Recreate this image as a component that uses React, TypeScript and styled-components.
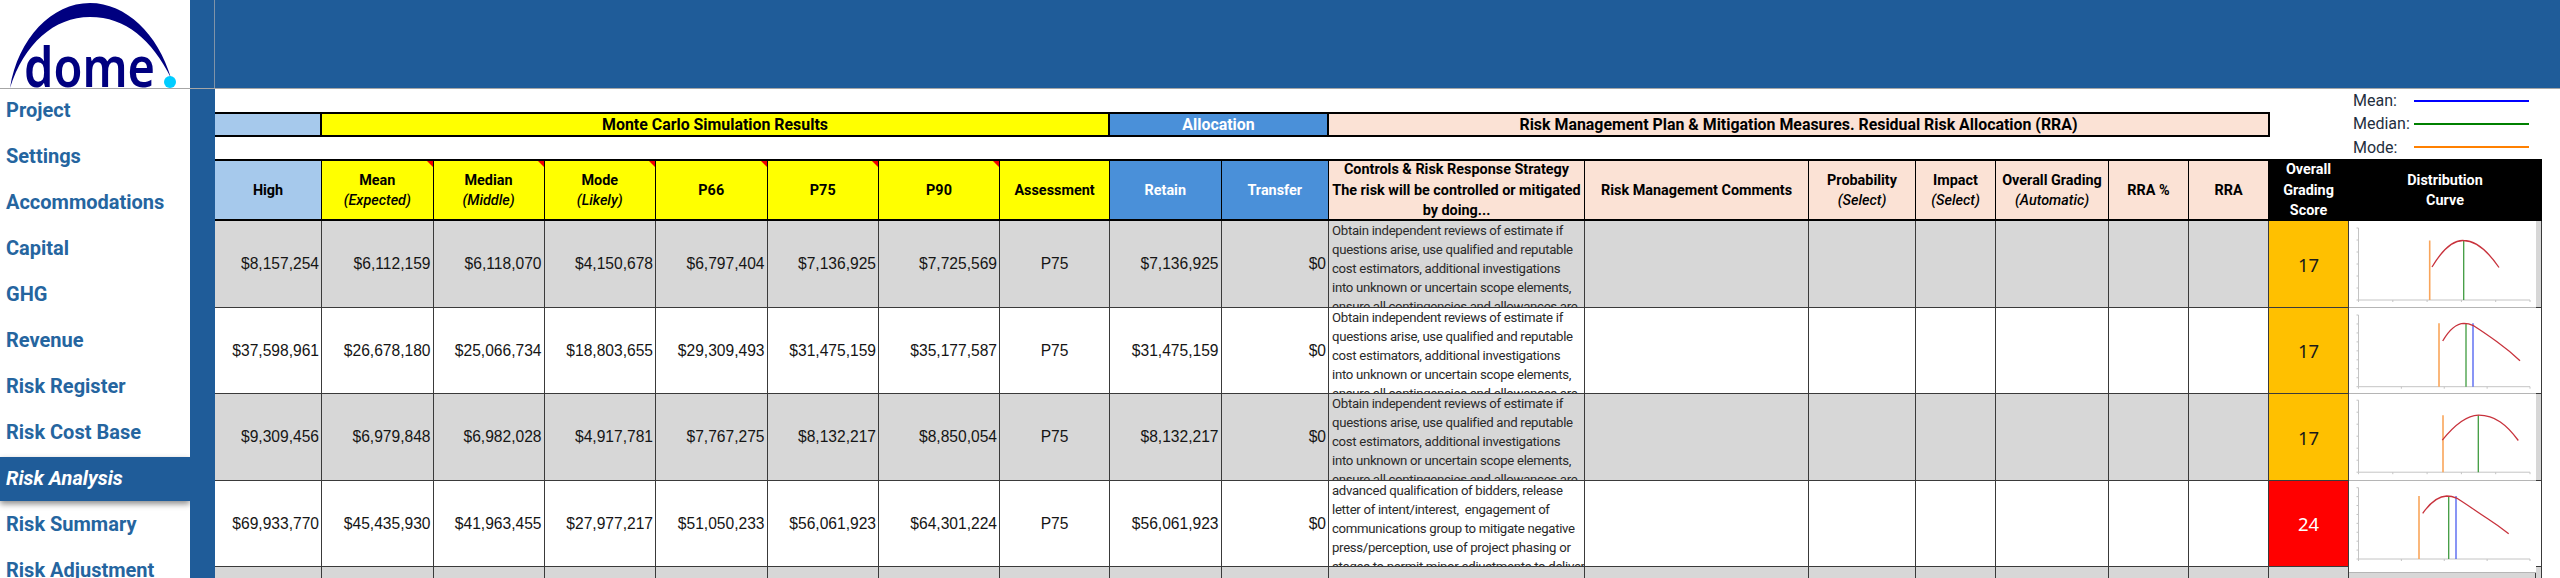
import React from "react";
import styled, { createGlobalStyle } from "styled-components";

const BLUE = "#1f5c99";
const LINE = "#3a3a3a";

const columnWidths = [
  107, 111.5, 111, 111.5, 111.5, 111.5, 121, 110, 111.5, 107.5, 256, 224, 107,
  80, 113, 80, 80, 80, 187, 6,
];
const gridColumns = columnWidths.map((w) => `${w}px`).join(" ");

const GlobalStyle = createGlobalStyle`
  html, body {
    margin: 0;
    padding: 0;
    height: 578px;
    overflow: hidden;
    background: #fff;
    font-family: Roboto, "Liberation Sans", sans-serif;
  }
  * { box-sizing: border-box; }
`;

const Page = styled.div`
  display: flex;
  width: 2560px;
  height: 578px;
  overflow: hidden;
`;

const Sidebar = styled.aside`
  width: 190px;
  flex: none;
  display: flex;
  flex-direction: column;
`;

const LogoBox = styled.div`
  height: 89px;
  flex: none;
  border-bottom: 1px solid #a6a6a6;
  overflow: hidden;
`;

const Nav = styled.nav`
  display: flex;
  flex-direction: column;
  margin-top: -1px;
`;

const NavItem = styled.a<{ $active?: boolean }>`
  flex: none;
  height: 44px;
  margin: 1px 0;
  padding: 0 0 2px 6px;
  display: flex;
  align-items: center;
  font-size: 20px;
  font-weight: 700;
  color: ${(p) => (p.$active ? "#fff" : "#25659f")};
  font-style: ${(p) => (p.$active ? "italic" : "normal")};
  background: ${(p) => (p.$active ? BLUE : "transparent")};
  box-shadow: ${(p) => (p.$active ? "0 3px 6px rgba(0,0,0,.45)" : "none")};
`;

const Main = styled.div`
  flex: 1;
  display: flex;
  flex-direction: column;
  min-width: 0;
`;

const TopBar = styled.header`
  height: 89px;
  flex: none;
  background: ${BLUE};
  border-bottom: 1px solid #a6a6a6;
`;

const FreezeLine = styled.div`
  margin-left: 24px;
  height: 100%;
  border-left: 1px solid #7f93a8;
`;

const Body = styled.div`
  flex: 1;
  display: flex;
  min-height: 0;
`;

const Strip = styled.div`
  width: 25px;
  flex: none;
  background: ${BLUE};
`;

const Sheet = styled.div`
  flex: 1;
  min-width: 0;
`;

const TopArea = styled.div`
  height: 70px;
  display: flex;
`;

const Band = styled.div`
  display: grid;
  grid-template-columns: 107px 788px 219px 941px;
  height: 25px;
  margin-top: 23px;
  flex: none;
  border: solid #000;
  border-width: 2px 0;
`;

const BandCell = styled.div<{ $bg: string; $light?: boolean }>`
  display: flex;
  align-items: center;
  justify-content: center;
  background: ${(p) => p.$bg};
  color: ${(p) => (p.$light ? "#fff" : "#000")};
  font-size: 15.9px;
  font-weight: 700;
  border-right: 2px solid #000;
`;

const Legend = styled.div`
  flex: none;
  margin-left: 83px;
  width: 180px;
  display: flex;
  flex-direction: column;
`;

const LegendRow = styled.div`
  height: 23.5px;
  display: flex;
  align-items: center;
  font-size: 16px;
  color: #1f2f40;
`;

const LegendLabel = styled.span`
  width: 61px;
`;

const LegendLine = styled.span<{ $color: string }>`
  width: 115px;
  height: 2px;
  background: ${(p) => p.$color};
`;

const Table = styled.div`
  display: grid;
  grid-template-columns: ${gridColumns};
  grid-template-rows: 62px 87px 86px 87px 86px 30px;
`;

const HeaderCell = styled.div<{
  $bg: string;
  $light?: boolean;
  $note?: boolean;
  $span?: number;
}>`
  position: relative;
  display: flex;
  flex-direction: column;
  align-items: center;
  justify-content: center;
  padding-top: 2px;
  text-align: center;
  white-space: nowrap;
  grid-column: span ${(p) => p.$span ?? 1};
  background: ${(p) => p.$bg};
  color: ${(p) => (p.$light ? "#fff" : "#000")};
  font-size: 14.4px;
  font-weight: 700;
  line-height: 20.5px;
  border: solid #000;
  border-width: 2px 1.5px 2px 0;
  ${(p) =>
    p.$note &&
    `
    &::after {
      content: "";
      position: absolute;
      top: 0;
      right: 0;
      border-style: solid;
      border-width: 0 6px 6px 0;
      border-color: transparent #f00000 transparent transparent;
    }
  `}
`;

const Sub = styled.em`
  font-weight: 500;
  font-style: italic;
`;

const Cell = styled.div<{ $shaded: boolean }>`
  display: flex;
  align-items: center;
  justify-content: flex-end;
  padding-right: 2px;
  overflow: hidden;
  background: ${(p) => (p.$shaded ? "#d7d7d7" : "#fff")};
  color: #151515;
  font-family: "Liberation Sans", sans-serif;
  font-size: 15.6px;
  border-right: 1px solid ${LINE};
  border-bottom: 1px solid ${LINE};
`;

const CenterCell = styled(Cell)`
  justify-content: center;
  padding-right: 0;
`;

const NoteCell = styled(Cell)`
  display: block;
  padding: 0 0 0 3px;
  font-family: Roboto, sans-serif;
  font-size: 13.2px;
  letter-spacing: -0.3px;
  line-height: 19px;
  color: #2a2a2a;
`;

const NoteLine = styled.span`
  display: block;
  white-space: pre;
`;

const ScoreCell = styled.div<{ $hot: boolean }>`
  display: flex;
  align-items: center;
  justify-content: center;
  background: ${(p) => (p.$hot ? "#ff0000" : "#ffc000")};
  color: ${(p) => (p.$hot ? "#fff" : "#1a1a1a")};
  font-family: "Noto Sans", sans-serif;
  font-size: 18.5px;
  border-right: 1px solid ${LINE};
  border-bottom: 1px solid ${LINE};
`;

const ChartCell = styled.div<{ $tall?: boolean }>`
  position: relative;
  z-index: 1;
  background: #fff;
  border-bottom: 1px solid #b5b5b5;
  height: ${(p) => (p.$tall ? "92px" : "auto")};
`;

const EndCell = styled.div<{ $shaded: boolean }>`
  background: ${(p) => (p.$shaded ? "#d7d7d7" : "#fff")};
  border-right: 1px solid ${LINE};
  border-bottom: 1px solid ${LINE};
`;

const ChartSvg = styled.svg`
  display: block;
  width: 187px;
  height: 86px;
`;

type Chart = {
  curve: string;
  mode: number;
  median: number;
  mean?: number;
  top: number;
  yTop: number;
  axis: number;
  xTicks: number;
  yTicks: number;
};

const Distribution = ({ chart }: { chart: Chart }) => {
  const { curve, mode, median, mean, top, yTop, axis, xTicks, yTicks } = chart;
  const stepX = 171.5 / xTicks;
  const stepY = (axis - yTop) / yTicks;
  return (
    <ChartSvg viewBox="0 0 187 86">
      <g stroke="#c4c4c4" strokeWidth="1" fill="none">
        <path d={`M9.5 ${yTop}V${axis}H181`} />
        {Array.from({ length: xTicks + 1 }, (_, i) => (
          <path key={i} d={`M${9.5 + i * stepX} ${axis}v2`} />
        ))}
        {Array.from({ length: yTicks + 1 }, (_, i) => (
          <path key={i} d={`M7.5 ${yTop + i * stepY}h2`} />
        ))}
      </g>
      <path d={`M${mode} ${top}V${axis}`} stroke="#f9a55a" strokeWidth="1.6" />
      <path d={`M${median} ${top}V${axis}`} stroke="#3f9b3f" strokeWidth="1.3" />
      {mean !== undefined && (
        <path d={`M${mean} ${top}V${axis}`} stroke="#4a5cf0" strokeWidth="1.3" />
      )}
      <path d={curve} stroke="#c8323c" strokeWidth="1.3" fill="none" />
    </ChartSvg>
  );
};

const Logo = () => (
  <svg width="190" height="88" viewBox="0 0 190 88">
    <path
      d="M10 88C18 38 52 3 90 3C126 3 158 34 171 78C152 40 126 17 90 17C54 17 24 44 10 88Z"
      fill="#000080"
    />
    <text
      x="24"
      y="87"
      fontFamily="'Noto Sans', sans-serif"
      fontWeight="600"
      fontSize="56"
      fill="#000080"
      textLength="131"
      lengthAdjust="spacingAndGlyphs"
    >
      dome
    </text>
    <circle cx="170" cy="82" r="6" fill="#00ccff" />
  </svg>
);

const navItems = [
  "Project",
  "Settings",
  "Accommodations",
  "Capital",
  "GHG",
  "Revenue",
  "Risk Register",
  "Risk Cost Base",
  "Risk Analysis",
  "Risk Summary",
  "Risk Adjustment",
];

const YELLOW = "#ffff00";
const SKY = "#a6c9ec";
const MID = "#4a90d9";
const PEACH = "#fbe2d5";

const headers: {
  title: string[];
  sub?: string;
  bg: string;
  light?: boolean;
  note?: boolean;
  span?: number;
}[] = [
  { title: ["High"], bg: SKY },
  { title: ["Mean"], sub: "(Expected)", bg: YELLOW, note: true },
  { title: ["Median"], sub: "(Middle)", bg: YELLOW, note: true },
  { title: ["Mode"], sub: "(Likely)", bg: YELLOW, note: true },
  { title: ["P66"], bg: YELLOW, note: true },
  { title: ["P75"], bg: YELLOW, note: true },
  { title: ["P90"], bg: YELLOW, note: true },
  { title: ["Assessment"], bg: YELLOW },
  { title: ["Retain"], bg: MID, light: true },
  { title: ["Transfer"], bg: MID, light: true },
  {
    title: [
      "Controls & Risk Response Strategy",
      "The risk will be controlled or mitigated",
      "by doing...",
    ],
    bg: PEACH,
  },
  { title: ["Risk Management Comments"], bg: PEACH },
  { title: ["Probability"], sub: "(Select)", bg: PEACH },
  { title: ["Impact"], sub: "(Select)", bg: PEACH },
  { title: ["Overall Grading"], sub: "(Automatic)", bg: PEACH },
  { title: ["RRA %"], bg: PEACH },
  { title: ["RRA"], bg: PEACH },
  { title: ["Overall", "Grading", "Score"], bg: "#000", light: true },
  { title: ["Distribution", "Curve"], bg: "#000", light: true, span: 2 },
];

const estimateNote = [
  "Obtain independent reviews of estimate if",
  "questions arise, use qualified and reputable",
  "cost estimators, additional investigations",
  "into unknown or uncertain scope elements,",
  "ensure all contingencies and allowances are",
];

const biddersNote = [
  "advanced qualification of bidders, release",
  "letter of intent/interest,  engagement of",
  "communications group to mitigate negative",
  "press/perception, use of project phasing or",
  "stages to permit minor adjustments to deliver",
];

const rows: {
  values: string[];
  note: string[];
  score: number;
  chart: Chart;
}[] = [
  {
    values: ["$8,157,254", "$6,112,159", "$6,118,070", "$4,150,678", "$6,797,404", "$7,136,925", "$7,725,569"],
    note: estimateNote,
    score: 17,
    chart: {
      curve: "M83 46C92 31 103 19 114.5 19.5C127 19.5 138 29 150 46.5",
      mode: 80.7,
      median: 114.7,
      top: 19.5,
      yTop: 7,
      axis: 79,
      xTicks: 5,
      yTicks: 6,
    },
  },
  {
    values: ["$37,598,961", "$26,678,180", "$25,066,734", "$18,803,655", "$29,309,493", "$31,475,159", "$35,177,587"],
    note: estimateNote,
    score: 17,
    chart: {
      curve: "M93.7 33C100 22 107 15.5 115 15.3C120 15.3 122 16.5 125 18C132 22.5 140 28 148 33.7C156 39.5 164 46 171 52.7",
      mode: 90,
      median: 117,
      mean: 124,
      top: 15.3,
      yTop: 7,
      axis: 78.7,
      xTicks: 4,
      yTicks: 8,
    },
  },
  {
    values: ["$9,309,456", "$6,979,848", "$6,982,028", "$4,917,781", "$7,767,275", "$8,132,217", "$8,850,054"],
    note: estimateNote,
    score: 17,
    chart: {
      curve: "M93.3 46.2C104 33 116 21.5 129.3 21.2C146 21 158 31 169.3 46.5",
      mode: 94,
      median: 129.3,
      top: 21.2,
      yTop: 6.2,
      axis: 78.2,
      xTicks: 5,
      yTicks: 6,
    },
  },
  {
    values: ["$69,933,770", "$45,435,930", "$41,963,455", "$27,977,217", "$51,050,233", "$56,061,923", "$64,301,224"],
    note: biddersNote,
    score: 24,
    chart: {
      curve: "M73.7 32.3C81 22 89 15.2 97.7 15C103 15 105 16 108 17.3C117 23 127 30 138 37.3C146 42.5 153 47.5 159.7 52.7",
      mode: 70,
      median: 99.7,
      mean: 107,
      top: 15,
      yTop: 6.7,
      axis: 78,
      xTicks: 4,
      yTicks: 8,
    },
  },
];

const App = () => {
  return (
    <Page>
      <GlobalStyle />
      <Sidebar>
        <LogoBox>
          <Logo />
        </LogoBox>
        <Nav>
          {navItems.map((item) => (
            <NavItem key={item} $active={item === "Risk Analysis"}>
              {item}
            </NavItem>
          ))}
        </Nav>
      </Sidebar>
      <Main>
        <TopBar>
          <FreezeLine />
        </TopBar>
        <Body>
          <Strip />
          <Sheet>
            <TopArea>
              <Band>
                <BandCell $bg={SKY} />
                <BandCell $bg={YELLOW}>Monte Carlo Simulation Results</BandCell>
                <BandCell $bg={MID} $light>
                  Allocation
                </BandCell>
                <BandCell $bg={PEACH}>
                  Risk Management Plan &amp; Mitigation Measures. Residual Risk
                  Allocation (RRA)
                </BandCell>
              </Band>
              <Legend>
                <LegendRow>
                  <LegendLabel>Mean:</LegendLabel>
                  <LegendLine $color="#0000ff" />
                </LegendRow>
                <LegendRow>
                  <LegendLabel>Median:</LegendLabel>
                  <LegendLine $color="#008000" />
                </LegendRow>
                <LegendRow>
                  <LegendLabel>Mode:</LegendLabel>
                  <LegendLine $color="#ff8000" />
                </LegendRow>
              </Legend>
            </TopArea>
            <Table>
              {headers.map((h) => (
                <HeaderCell
                  key={h.title[0]}
                  $bg={h.bg}
                  $light={h.light}
                  $note={h.note}
                  $span={h.span}
                >
                  {h.title.map((t) => (
                    <span key={t}>{t}</span>
                  ))}
                  {h.sub && <Sub>{h.sub}</Sub>}
                </HeaderCell>
              ))}
              {rows.map((row, i) => {
                const shaded = i % 2 === 0;
                return (
                  <React.Fragment key={row.values[0]}>
                    {row.values.map((v) => (
                      <Cell key={v} $shaded={shaded}>
                        {v}
                      </Cell>
                    ))}
                    <CenterCell $shaded={shaded}>P75</CenterCell>
                    <Cell $shaded={shaded}>{row.values[5]}</Cell>
                    <Cell $shaded={shaded}>$0</Cell>
                    <NoteCell $shaded={shaded}>
                      {row.note.map((line) => (
                        <NoteLine key={line}>{line}</NoteLine>
                      ))}
                    </NoteCell>
                    {[0, 1, 2, 3, 4, 5].map((c) => (
                      <Cell key={c} $shaded={shaded} />
                    ))}
                    <ScoreCell $hot={row.score > 20}>{row.score}</ScoreCell>
                    <ChartCell $tall={i === 3}>
                      <Distribution chart={row.chart} />
                    </ChartCell>
                    <EndCell $shaded={shaded} />
                  </React.Fragment>
                );
              })}
              {columnWidths.map((_, c) => (
                <Cell key={c} $shaded />
              ))}
            </Table>
          </Sheet>
        </Body>
      </Main>
    </Page>
  );
};

export default App;
